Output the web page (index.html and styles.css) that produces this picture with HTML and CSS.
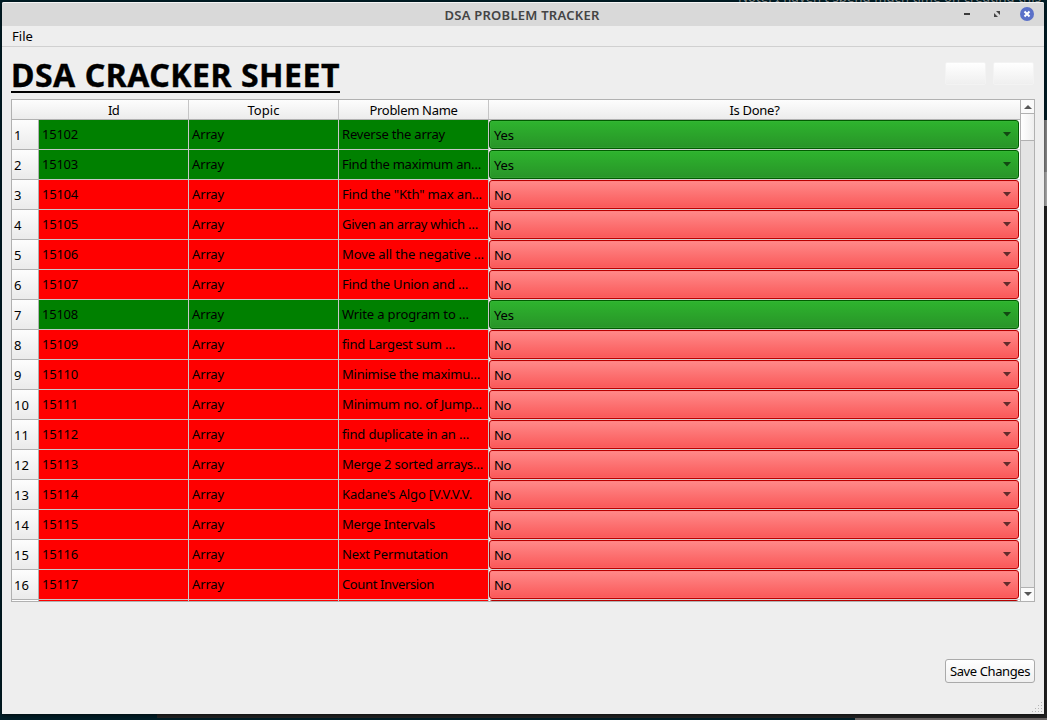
FILE: index.html
```html
<!DOCTYPE html>
<html lang="en">
<head>
<meta charset="utf-8">
<title>DSA PROBLEM TRACKER</title>
<link rel="stylesheet" href="styles.css">
</head>
<body>
<div class="behind-top"><span class="fit" data-w="303">Note: I haven't spend much time on creating this</span></div>
<div class="behind-right"></div>
<div class="behind-bottom"></div>
<div class="behind-corner"></div>
<main class="window">
  <header class="titlebar">
    <span class="title"><span class="fit" data-w="155">DSA PROBLEM TRACKER</span></span>
    <svg class="controls" width="82" height="23" viewBox="0 0 82 23">
      <path d="M2 10h6v2H2z" fill="#3a3a3a"/>
      <path d="M34 8h4v4zM32 10v4h4z" fill="#444"/>
      <circle cx="65" cy="11" r="7" fill="#5a70c8"/>
      <path d="M62.500 8.500l5 5m0-5l-5 5" stroke="#fff" stroke-width="2"/>
    </svg>
  </header>
  <nav class="menubar"><span class="fit" data-w="21">File</span></nav>
  <section class="heading">
    <h1><span class="fit" data-w="329">DSA CRACKER SHEET</span></h1>
    <div class="blank-buttons"><i></i><i></i></div>
  </section>
  <section class="table">
    <div class="grid">
      <div class="head"><span class="corner"></span><span class="id"><b class="fit" data-w="11">Id</b></span><span><b class="fit" data-w="32">Topic</b></span><span><b class="fit" data-w="88">Problem Name</b></span><span class="done"><b class="fit" data-w="50">Is Done?</b></span></div>
      <div id="rows"></div>
    </div>
    <div class="scroll">
      <div class="arrow"><svg width="8" height="4"><path d="M0 4L4 0l4 4z" fill="#555"/></svg></div>
      <div class="thumb"></div>
      <div class="track"></div>
      <div class="arrow down"><svg width="8" height="4"><path d="M0 0h8L4 4z" fill="#555"/></svg></div>
    </div>
  </section>
  <footer><button><span class="fit" data-w="80">Save Changes</span></button></footer>
  <svg class="grip" width="11" height="11" fill="#b5b5b5"><path d="M9 0h1v1h-1zM6 3h1v1h-1zM9 3h1v1h-1zM3 6h1v1h-1zM6 6h1v1h-1zM9 6h1v1h-1zM0 9h1v1h-1zM3 9h1v1h-1zM6 9h1v1h-1zM9 9h1v1h-1z"/></svg>
</main>
<script src="app.js"></script>
</body>
</html>
```
FILE: styles.css
```css
* { box-sizing: border-box; }
body { margin: 0; width: 1047px; height: 720px; overflow: hidden; position: relative; background: #001e27; font: 13px/18px "Noto Sans", "Open Sans", sans-serif; color: #000; }
.behind-top { position: absolute; left: 738px; top: -10px; width: 306px; height: 14px; line-height: 14px; font-size: 13px; color: #8c9293; white-space: nowrap; }
.behind-right { position: absolute; left: 1044px; top: 120px; width: 3px; height: 600px; background: linear-gradient(#8b8b8b 0 52px, #b0b0b0 52px 86px, #242424 86px); }
.behind-bottom { position: absolute; left: 157px; top: 714px; width: 890px; height: 4px; background: #242424; }
.behind-corner { position: absolute; left: 855px; top: 718px; width: 192px; height: 2px; background: #6b6666; }
.window { position: absolute; left: 2px; top: 2px; width: 1042px; height: 712px; background: #eee; display: flex; flex-direction: column; border-radius: 2px 2px 0 0; box-shadow: 0 1px 4px #000a; }
.titlebar { height: 24px; border-top: 1px solid #f5f5f5; background: #d9d9d9; display: flex; justify-content: flex-end; border-radius: 2px 2px 0 0; }
.title { flex: 1; padding-left: 82px; text-align: center; font-weight: 600; font-size: 13px; line-height: 25px; color: #444; position: relative; left: -1px; }
.controls { flex: none; }
.menubar { height: 21px; border-bottom: 1px solid #d0d0d0; padding-left: 10px; line-height: 21px; }
.heading { height: 52px; display: flex; justify-content: space-between; padding: 12px 9px 0; }
h1 { margin: 0; width: 329px; height: 34px; border-bottom: 2px solid #000; font-size: 32px; line-height: 31px; font-weight: 700; white-space: nowrap; -webkit-text-stroke: .4px #000; }
.blank-buttons { display: flex; gap: 7px; padding: 3px 1px 0 0; }
.blank-buttons i { width: 41px; height: 23px; border-radius: 2px; background: linear-gradient(#fff, #efefef); border: 1px solid #f3f3f3; }
.table { width: 1024px; height: 503px; margin-left: 9px; border: 1px solid #b1b1b1; display: flex; background: #fff; overflow: hidden; flex: none; }
.grid { width: 1008px; overflow: hidden; }
.head, .row { display: grid; grid-template-columns: 27px 150px 150px 150px 531px; }
.head { height: 20px; background: linear-gradient(#fdfdfd, #ececec); border-bottom: 1px solid #b1b1b1; text-align: center; line-height: 20px; }
.head > span { border-right: 1px solid #c5c5c5; }
.head > .corner, .head > .done { border-right: 0; }
.head b { font-weight: 400; }
.head { grid-template-rows: 19px; }
.row { height: 30px; grid-template-rows: 30px; }
.num { background: linear-gradient(#fdfdfd, #ebebeb); border-right: 1px solid #b1b1b1; border-bottom: 1px solid #b1b1b1; padding-left: 2px; line-height: 30px; }
.cell { border-right: 1px solid #c8c8c8; border-bottom: 1px solid #c8c8c8; padding-left: 3px; line-height: 28px; white-space: nowrap; overflow: hidden; background: #f00; }
.yes .cell { background: #008000; }
.combo-cell { border-bottom: 1px solid #d4d4d4; background: #fff; }
.combo { width: 530px; height: 29px; border: 1px solid #b80000; border-radius: 3px; background: linear-gradient(#ff8a8a, #fa5858); box-shadow: inset 0 0 0 1px #ff777755; display: flex; align-items: center; justify-content: space-between; padding: 0 7px 0 4px; }
.combo svg { margin-top: -1px; fill: #632b2b; }
.yes .combo { border-color: #005c00; background: linear-gradient(#2eb42e, #289428); box-shadow: inset 0 0 0 1px #45b64555; }
.yes .combo svg { fill: #124812; }
.scroll { width: 14px; border-left: 1px solid #b1b1b1; display: flex; flex-direction: column; background: #e4e4e4; }
.arrow { height: 14px; display: flex; align-items: center; justify-content: center; background: #fafafa; border-bottom: 1px solid #b1b1b1; }
.arrow.down { border-bottom: 0; border-top: 1px solid #b1b1b1; padding-bottom: 1px; }
.thumb { height: 27px; background: linear-gradient(90deg, #fff, #efefef); border-bottom: 1px solid #b1b1b1; }
.track { flex: 1; }
footer { display: flex; justify-content: flex-end; padding: 57px 9px 0; }
button { width: 90px; height: 24px; padding: 0; border: 1px solid #aaa; border-radius: 3px; background: linear-gradient(#fff, #f0f0f0); font: inherit; color: #000; white-space: nowrap; }
.fit { display: inline-block; white-space: nowrap; vertical-align: top; }
.grip { position: absolute; right: 1px; bottom: 1px; }
```
FILE: app.js
```js
const problems = [
  [1, "Reverse the array", 103], [1, "Find the maximum an…", 139],
  [0, "Find the \"Kth\" max an…", 140], [0, "Given an array which …", 136],
  [0, "Move all the negative …", 142], [0, "Find the Union and …", 126],
  [1, "Write a program to …", 127], [0, "find Largest sum …", 113],
  [0, "Minimise the maximu…", 138], [0, "Minimum no. of Jump…", 140],
  [0, "find duplicate in an …", 127], [0, "Merge 2 sorted arrays…", 141],
  [0, "Kadane's Algo [V.V.V.V.", 130], [0, "Merge Intervals", 93],
  [0, "Next Permutation", 106], [0, "Count Inversion", 92], [0, "", 0]
];
document.getElementById("rows").innerHTML = problems.map(([done, name, width], i) => `
  <div class="row ${done ? "yes" : ""}">
    <div class="num">${i < 16 ? `<span class="fit" data-w="${i < 9 ? 7 : 15}">${i + 1}</span>` : ""}</div>
    <div class="cell">${i < 16 ? `<span class="fit" data-w="36">${15102 + i}</span>` : ""}</div>
    <div class="cell">${i < 16 ? '<span class="fit" data-w="32">Array</span>' : ""}</div>
    <div class="cell"><span class="fit" data-w="${width}">${name}</span></div>
    <div class="combo-cell"><div class="combo"><span class="fit" data-w="${done ? 20 : 17}">${i < 16 ? (done ? "Yes" : "No") : ""}</span><svg width="8" height="5"><path d="M0 0h8L4 4.500z"/></svg></div></div>
  </div>`).join("");

// Spread the letters so every label fills its nominal width.
document.querySelectorAll(".fit").forEach(label => {
  const count = label.textContent.length;
  if (!count) return;
  const gap = (label.dataset.w - label.getBoundingClientRect().width) / count;
  label.style.letterSpacing = gap + "px";
});
```
